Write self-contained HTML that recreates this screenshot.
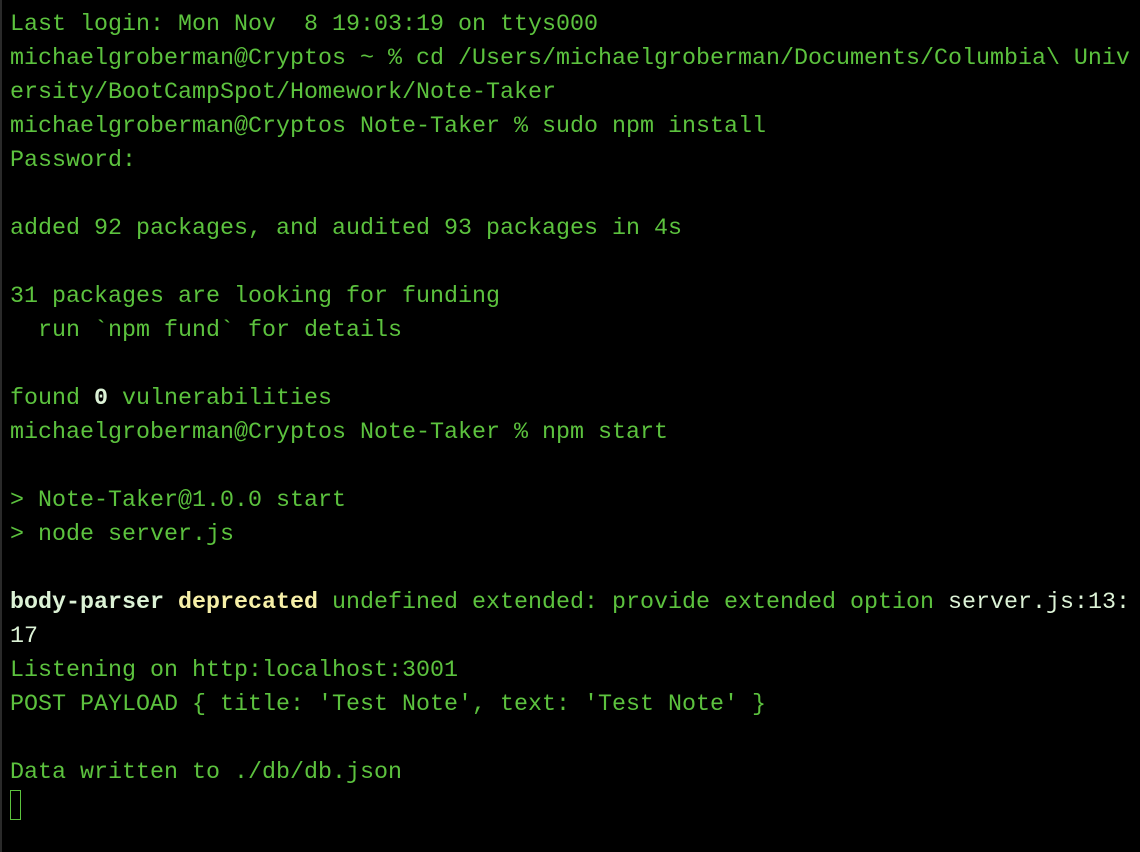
<!DOCTYPE html>
<html><head><meta charset="utf-8"><style>
html,body{margin:0;padding:0;background:#000;width:1140px;height:852px;overflow:hidden}
.t{position:absolute;left:10px;top:8px;font-family:"Liberation Mono","DejaVu Sans Mono",monospace;font-size:23.33px;line-height:34px;color:#5cc23e;white-space:pre}
.w{color:#dcf2d6;font-weight:bold}
.p{color:#dcf2d6}
.y{color:#f7f0a8;font-weight:bold}
.b{color:#dcf2d6;font-weight:bold}
.cur{display:inline-block;width:11px;height:30px;border:1.5px solid #5cc23e;box-sizing:border-box;vertical-align:-8px}
.edge{position:absolute;left:0;top:0;width:2px;height:852px;background:#2a2a2a}
</style></head><body><div class="edge"></div><div class="t">Last login: Mon Nov  8 19:03:19 on ttys000
michaelgroberman@Cryptos ~ % cd /Users/michaelgroberman/Documents/Columbia\ Univ
ersity/BootCampSpot/Homework/Note-Taker
michaelgroberman@Cryptos Note-Taker % sudo npm install
Password:

added 92 packages, and audited 93 packages in 4s

31 packages are looking for funding
  run `npm fund` for details

found <span class="b">0</span> vulnerabilities
michaelgroberman@Cryptos Note-Taker % npm start

&gt; Note-Taker@1.0.0 start
&gt; node server.js

<span class="w">body-parser</span> <span class="y">deprecated</span> undefined extended: provide extended option <span class="p">server.js:13:</span>
<span class="p">17</span>
Listening on http:localhost:3001
POST PAYLOAD { title: 'Test Note', text: 'Test Note' }

Data written to ./db/db.json
<span class="cur"></span></div></body></html>
